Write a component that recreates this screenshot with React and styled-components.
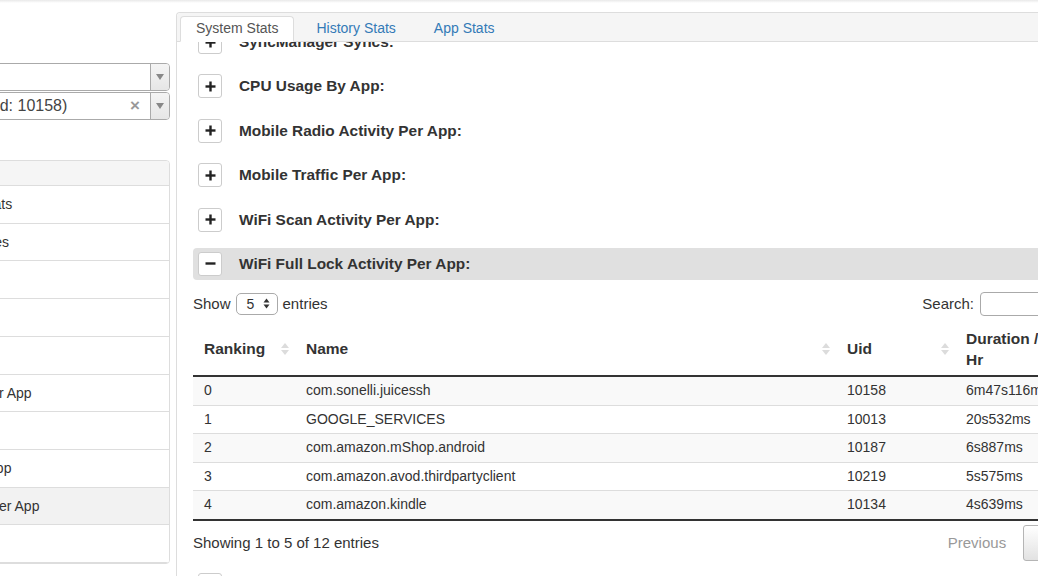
import React, { useLayoutEffect, useRef } from "react";
import styled, { createGlobalStyle } from "styled-components";

const GlobalStyle = createGlobalStyle`
  * { box-sizing: border-box; }
  html, body { margin: 0; padding: 0; background: #fff; overflow: hidden; }
  body {
    font-family: "Liberation Sans", Arial, sans-serif;
    font-size: 14px;
    color: #333;
  }
`;

const sideItems = [
  "Aggregated Stats",
  "Power Estimates",
  "Wakelocks",
  "Kernel",
  "Syncs",
  "CPU Usage Per App",
  "Alarms",
  "Bluetooth By App",
  "Mobile Radio Per App",
  "Sensors",
];

const sections = [
  { title: "SyncManager Syncs:" },
  { title: "CPU Usage By App:" },
  { title: "Mobile Radio Activity Per App:" },
  { title: "Mobile Traffic Per App:" },
  { title: "WiFi Scan Activity Per App:" },
  { title: "WiFi Full Lock Activity Per App:", open: true },
  { title: "Sensor Usage Per App:" },
  { title: "Userspace Wakelocks:" },
];

const rows = [
  { rank: 0, name: "com.sonelli.juicessh", uid: 10158, dur: "6m47s116ms" },
  { rank: 1, name: "GOOGLE_SERVICES", uid: 10013, dur: "20s532ms" },
  { rank: 2, name: "com.amazon.mShop.android", uid: 10187, dur: "6s887ms" },
  { rank: 3, name: "com.amazon.avod.thirdpartyclient", uid: 10219, dur: "5s575ms" },
  { rank: 4, name: "com.amazon.kindle", uid: 10134, dur: "4s639ms" },
];

function SortIcon() {
  return (
    <svg width="8" height="14" viewBox="0 0 8 14">
      <path d="M0 6 L4 1 L8 6 Z" fill="#dcdcdc" />
      <path d="M0 8 L4 13 L8 8 Z" fill="#dcdcdc" />
    </svg>
  );
}

function ToggleGlyph({ open }) {
  return (
    <svg width="11" height="11" viewBox="0 0 11 11">
      <line x1="0.5" y1="5.5" x2="10.5" y2="5.5" stroke="#222" strokeWidth="2.4" />
      {!open && <line x1="5.5" y1="0.5" x2="5.5" y2="10.5" stroke="#222" strokeWidth="2.4" />}
    </svg>
  );
}

function SpinArrows() {
  return (
    <svg width="7" height="11" viewBox="0 0 7 11">
      <path d="M0.5 4.5 L3.5 0.5 L6.5 4.5 Z" fill="#333" />
      <path d="M0.5 6.5 L3.5 10.5 L6.5 6.5 Z" fill="#333" />
    </svg>
  );
}

export default function App() {
  const bodyRef = useRef(null);

  useLayoutEffect(() => {
    if (bodyRef.current) bodyRef.current.scrollTop = 16;
  }, []);

  return (
    <Shell>
      <GlobalStyle />
      <TopShade />
      <Page>
        <Sidebar>
          <SelectBox>
            <SelectText>Device</SelectText>
            <ArrowCell>
              <Caret />
            </ArrowCell>
          </SelectBox>
          <SelectBox>
            <SelectText>juicessh (Uid: 10158)</SelectText>
            <Clear>×</Clear>
            <ArrowCell>
              <Caret />
            </ArrowCell>
          </SelectBox>

          <ListPanel>
            <ListHead>Stats</ListHead>
            {sideItems.map((item, i) => (
              <ListItem key={item} $active={i === 8}>
                {item}
              </ListItem>
            ))}
          </ListPanel>
        </Sidebar>

        <MainPanel>
          <TabBar>
            <Tab $active>System Stats</Tab>
            <Tab>History Stats</Tab>
            <Tab>App Stats</Tab>
          </TabBar>

          <PanelBody ref={bodyRef}>
            {sections.map((s) => (
              <Section key={s.title} $open={s.open}>
                <SectionHead $open={s.open}>
                  <Toggle>
                    <ToggleGlyph open={s.open} />
                  </Toggle>
                  {s.title}
                </SectionHead>

                {s.open && (
                  <DataPanel>
                    <Controls>
                      <Length>
                        Show
                        <MiniSelect>
                          5
                          <SpinArrows />
                        </MiniSelect>
                        entries
                      </Length>
                      <SearchLabel>
                        Search:
                        <SearchInput />
                      </SearchLabel>
                    </Controls>

                    <Table>
                      <colgroup>
                        <col style={{ width: 102 }} />
                        <col style={{ width: 541 }} />
                        <col style={{ width: 119 }} />
                        <col />
                      </colgroup>
                      <thead>
                        <tr>
                          <Th>
                            <HeadInner>
                              <span>Ranking</span>
                              <SortIcon />
                            </HeadInner>
                          </Th>
                          <Th>
                            <HeadInner>
                              <span>Name</span>
                              <SortIcon />
                            </HeadInner>
                          </Th>
                          <Th>
                            <HeadInner>
                              <span>Uid</span>
                              <SortIcon />
                            </HeadInner>
                          </Th>
                          <Th>
                            <HeadInner>
                              <HeadLabel $narrow>Duration / Hr</HeadLabel>
                              <SortIcon />
                            </HeadInner>
                          </Th>
                        </tr>
                      </thead>
                      <tbody>
                        {rows.map((r) => (
                          <Tr key={r.rank}>
                            <Td>{r.rank}</Td>
                            <Td>{r.name}</Td>
                            <Td>{r.uid}</Td>
                            <Td>{r.dur}</Td>
                          </Tr>
                        ))}
                      </tbody>
                    </Table>

                    <InfoRow>
                      <span>Showing 1 to 5 of 12 entries</span>
                      <Pager>
                        <PageLink $disabled>Previous</PageLink>
                        <PageLink $current>1</PageLink>
                        <PageLink>2</PageLink>
                        <PageLink>3</PageLink>
                        <PageLink>Next</PageLink>
                      </Pager>
                    </InfoRow>
                  </DataPanel>
                )}
              </Section>
            ))}
          </PanelBody>
        </MainPanel>
      </Page>
    </Shell>
  );
}

const Shell = styled.div`
  display: flex;
  flex-direction: column;
  height: 100vh;
`;

const TopShade = styled.div`
  height: 3px;
  flex: none;
  background: linear-gradient(#e9e9e9, #fff);
`;

const Page = styled.div`
  display: flex;
  align-items: flex-start;
  margin-left: -112px;
  width: 1334px;
  flex: 1;
`;

const Sidebar = styled.aside`
  width: 282px;
  flex: none;
  padding-top: 60px;
`;

const SelectBox = styled.div`
  display: flex;
  align-items: center;
  height: 28px;
  border: 1px solid #aaa;
  border-radius: 4px;
  background: #fff;
  font-size: 16px;
  color: #444;
  overflow: hidden;

  & + & {
    margin-top: 1px;
  }
`;

const SelectText = styled.span`
  flex: 1;
  padding-left: 28px;
  white-space: nowrap;
`;

const Clear = styled.span`
  color: #999;
  font-size: 17px;
  font-weight: bold;
  margin-right: 10px;
`;

const ArrowCell = styled.span`
  align-self: stretch;
  width: 19px;
  display: flex;
  align-items: center;
  justify-content: center;
  border-left: 1px solid #aaa;
  background: linear-gradient(#f4f4f4, #e6e6e6);
`;

const Caret = styled.span`
  width: 0;
  height: 0;
  border-left: 4px solid transparent;
  border-right: 4px solid transparent;
  border-top: 6px solid #888;
`;

const ListPanel = styled.div`
  margin-top: 40px;
  border: 1px solid #ddd;
  border-radius: 4px;
  overflow: hidden;
`;

const ListHead = styled.div`
  height: 25px;
  line-height: 24px;
  padding: 0 15px;
  background: #f5f5f5;
  border-bottom: 1px solid #ddd;
  font-weight: bold;
`;

const ListItem = styled.div`
  padding: 9px 15px;
  line-height: 18.7px;
  border-bottom: 1px solid #ddd;
  white-space: nowrap;
  background: ${(p) => (p.$active ? "#f2f2f2" : "#fff")};
`;

const MainPanel = styled.main`
  width: 1046px;
  flex: none;
  margin: 9px 0 0 6px;
  height: calc(100vh - 12px);
  display: flex;
  flex-direction: column;
  border: 1px solid #ddd;
  border-bottom: none;
  border-radius: 4px 4px 0 0;
`;

const TabBar = styled.nav`
  flex: none;
  height: 29px;
  display: flex;
  align-items: flex-end;
  padding: 3px 0 0 3px;
  background: #f5f5f5;
  border-bottom: 1px solid #ddd;
  border-radius: 4px 4px 0 0;
`;

const Tab = styled.div`
  height: 26px;
  margin: 0 6px -1px 0;
  padding: 0 15px;
  line-height: 23px;
  font-size: 14px;
  border: 1px solid transparent;
  border-radius: 4px 4px 0 0;
  color: ${(p) => (p.$active ? "#555" : "#337ab7")};
  background: ${(p) => (p.$active ? "#fff" : "transparent")};
  border-color: ${(p) => (p.$active ? "#ddd #ddd #fff" : "transparent")};
`;

const PanelBody = styled.div`
  flex: 1;
  overflow: hidden;
  padding: 0 16px;
`;

const Section = styled.section`
  margin-bottom: ${(p) => (p.$open ? "8px" : "12.4px")};
`;

const SectionHead = styled.div`
  display: flex;
  align-items: center;
  height: 32px;
  padding-left: 5px;
  border-radius: 4px;
  background: ${(p) => (p.$open ? "#e0e0e0" : "transparent")};
  font-size: 15.4px;
  font-weight: bold;
  color: #333;
  white-space: nowrap;
`;

const Toggle = styled.span`
  width: 24px;
  height: 24px;
  margin-right: 17px;
  display: flex;
  align-items: center;
  justify-content: center;
  background: #fff;
  border: 1px solid #ccc;
  border-radius: 3px;
`;

const DataPanel = styled.div`
  padding-top: 12px;
`;

const Controls = styled.div`
  display: flex;
  justify-content: space-between;
  align-items: center;
  height: 24px;
  font-size: 15px;
`;

const Length = styled.div`
  display: flex;
  align-items: center;
  gap: 5px;
`;

const MiniSelect = styled.span`
  width: 42px;
  height: 22px;
  display: flex;
  align-items: center;
  justify-content: space-between;
  padding: 0 7px 0 10px;
  border: 1px solid #aaa;
  border-radius: 5px;
  background: #fff;
  font-size: 14px;
`;

const SearchLabel = styled.label`
  display: flex;
  align-items: center;
  gap: 6px;
`;

const SearchInput = styled.input`
  width: 225px;
  height: 24px;
  border: 1px solid #aaa;
  border-radius: 4px;
  background: #fff;
`;

const Table = styled.table`
  width: 100%;
  margin-top: 4px;
  border-collapse: collapse;
  table-layout: fixed;
`;

const Th = styled.th`
  padding: 8px 6px 5px 11px;
  text-align: left;
  vertical-align: middle;
  line-height: 21px;
  font-size: 15.5px;
  font-weight: bold;
  color: #333;
  border-bottom: 2px solid #333;
`;

const HeadInner = styled.div`
  display: flex;
  align-items: center;
  justify-content: space-between;
`;

const HeadLabel = styled.span`
  max-width: ${(p) => (p.$narrow ? "88px" : "none")};
`;

const Tr = styled.tr`
  &:nth-child(odd) {
    background: #f9f9f9;
  }
  &:last-child td {
    border-bottom: 2px solid #333;
  }
`;

const Td = styled.td`
  padding: 5px 10px 5px 11px;
  line-height: 17.6px;
  font-size: 14px;
  border-bottom: 1px solid #ddd;
  white-space: nowrap;
`;

const InfoRow = styled.div`
  margin-top: 4px;
  display: flex;
  justify-content: space-between;
  align-items: center;
  font-size: 15px;
`;

const Pager = styled.div`
  display: flex;
`;

const PageLink = styled.span`
  height: 36px;
  line-height: 34px;
  padding: 0 14px;
  margin-left: 2px;
  border: 1px solid ${(p) => (p.$current ? "#b5b5b5" : "transparent")};
  border-radius: 3px;
  color: ${(p) => (p.$disabled ? "#999" : "#333")};
  background: ${(p) => (p.$current ? "linear-gradient(#fff, #e2e2e2)" : "transparent")};
`;
